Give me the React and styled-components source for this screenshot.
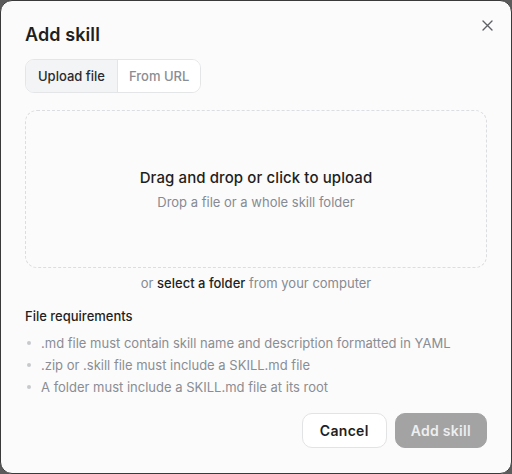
import React, { useState } from "react";
import styled, { createGlobalStyle } from "styled-components";

const Global = createGlobalStyle`
  html, body { margin: 0; padding: 0; background: #5b5b5b; }
  body { font-family: Inter, "Noto Sans", sans-serif; }
  * { box-sizing: border-box; }
`;

const Dialog = styled.div`
  width: 512px;
  height: 474px;
  background: #fbfbfb;
  border: 1px solid #3a3a3a;
  border-radius: 12px;
  padding: 20px 24px 0 24px;
  display: flex;
  flex-direction: column;
  position: relative;
`;

const Title = styled.h2`
  margin: 0;
  font-size: 18px;
  font-weight: 600;
  color: #1f1f22;
  letter-spacing: 0.1px;
  line-height: 28px;
`;

const Close = styled.button`
  position: absolute;
  top: 16px;
  right: 16px;
  width: 16px;
  height: 16px;
  border: 0;
  background: none;
  padding: 0;
  display: flex;
  align-items: center;
  justify-content: center;
  color: #5f6166;
`;

const Tabs = styled.div`
  margin-top: 10px;
  display: flex;
  align-self: flex-start;
  border: 1px solid #e4e5e7;
  border-radius: 9px;
  overflow: hidden;
  height: 34px;
  background: #fff;
`;

const Tab = styled.button`
  border: 0;
  font-family: inherit;
  font-size: 13px;
  padding: 0 ${(p) => (p.active ? "12px" : "11px")};
  background: ${(p) => (p.active ? "#f3f4f6" : "#fff")};
  color: ${(p) => (p.active ? "#2a2b2e" : "#8a8d93")};
  font-weight: 500;
  border-right: ${(p) => (p.active ? "1px solid #e4e5e7" : "0")};
`;

const Drop = styled.div`
  margin-top: 17px;
  height: 158px;
  border: 1px dashed #dcdde0;
  border-radius: 12px;
  display: flex;
  flex-direction: column;
  align-items: center;
  justify-content: center;
  gap: 7px;
`;

const DropTitle = styled.div`
  font-size: 15px;
  font-weight: 500;
  color: #1f1f22;
  letter-spacing: 0.1px;
`;

const DropSub = styled.div`
  font-size: 13px;
  color: #868a92;
`;

const Alt = styled.div`
  margin-top: 7px;
  text-align: center;
  font-size: 13px;
  color: #868a92;
  b { font-weight: 500; color: #1f1f22; }
`;

const ReqTitle = styled.div`
  margin-top: 17px;
  font-size: 13px;
  font-weight: 500;
  color: #1f1f22;
`;

const List = styled.ul`
  margin: 11px 0 0 0;
  padding: 0;
  list-style: none;
  display: flex;
  flex-direction: column;
  gap: 6px;
`;

const Item = styled.li`
  font-size: 13px;
  color: #8a8d93;
  line-height: 16px;
  display: flex;
  gap: 10px;
  &::before {
    content: "";
    width: 4px;
    height: 4px;
    border-radius: 50%;
    background: #c7c9cd;
    margin: 6px 0 0 2px;
  }
`;

const Footer = styled.div`
  margin-top: 18px;
  display: flex;
  justify-content: flex-end;
  gap: 8px;
`;

const Btn = styled.button`
  height: 35px;
  padding: 0 ${(p) => (p.primary ? "15px" : "17px")};
  border-radius: 10px;
  font-family: inherit;
  font-size: 14px;
  font-weight: 600;
  letter-spacing: 0.3px;
  border: 1px solid ${(p) => (p.primary ? "#a3a3a3" : "#e2e3e5")};
  background: ${(p) => (p.primary ? "#a3a3a3" : "#fff")};
  color: ${(p) => (p.primary ? "#eeeeee" : "#1f1f22")};
`;

export default function App() {
  const [tab, setTab] = useState("file");
  return (
    <>
      <Global />
      <Dialog>
        <Title>Add skill</Title>
        <Close aria-label="Close">
          <svg width="11" height="11" viewBox="0 0 11 11" fill="none" stroke="currentColor" strokeWidth="1.4" strokeLinecap="round">
            <path d="M1 1l9 9M10 1l-9 9" />
          </svg>
        </Close>
        <Tabs>
          <Tab active={tab === "file"} onClick={() => setTab("file")}>Upload file</Tab>
          <Tab active={tab === "url"} onClick={() => setTab("url")}>From URL</Tab>
        </Tabs>
        <Drop>
          <DropTitle>Drag and drop or click to upload</DropTitle>
          <DropSub>Drop a file or a whole skill folder</DropSub>
        </Drop>
        <Alt>
          or <b>select a folder</b> from your computer
        </Alt>
        <ReqTitle>File requirements</ReqTitle>
        <List>
          <Item>.md file must contain skill name and description formatted in YAML</Item>
          <Item>.zip or .skill file must include a SKILL.md file</Item>
          <Item>A folder must include a SKILL.md file at its root</Item>
        </List>
        <Footer>
          <Btn>Cancel</Btn>
          <Btn primary disabled>Add skill</Btn>
        </Footer>
      </Dialog>
    </>
  );
}
